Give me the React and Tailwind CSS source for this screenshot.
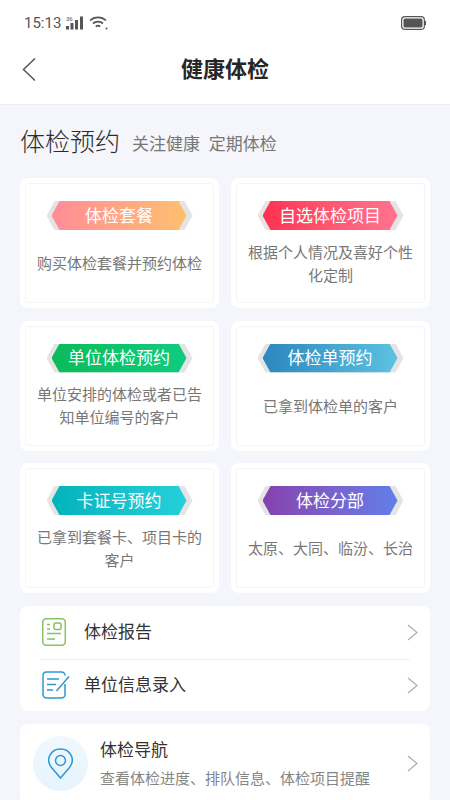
import React from 'react'

const cards = [
  { title: '体检套餐', desc: '购买体检套餐并预约体检', color: 'from-[#ff8c96] to-[#ffbf6e]' },
  { title: '自选体检项目', desc: '根据个人情况及喜好个性化定制', color: 'from-[#ff2f52] to-[#ff7390]' },
  { title: '单位体检预约', desc: '单位安排的体检或者已告知单位编号的客户', color: 'from-[#0cbb58] to-[#10cc80]' },
  { title: '体检单预约', desc: '已拿到体检单的客户', color: 'from-[#2c87bd] to-[#5cc2e2]' },
  { title: '卡证号预约', desc: '已拿到套餐卡、项目卡的客户', color: 'from-[#00b3bb] to-[#25d0da]' },
  { title: '体检分部', desc: '太原、大同、临汾、长治', color: 'from-[#8541ae] to-[#5e7fea]' },
]

function Chevron() {
  return (
    <svg width="11" height="17" viewBox="0 0 11 17" fill="none" stroke="#adadad" strokeWidth="1.2">
      <path d="M1 1l9 7.500-9 7.500" />
    </svg>
  )
}

function Card({ title, desc, color }) {
  return (
    <div className="h-[130px] rounded-[8px] bg-white p-[5px]">
      <div className="flex h-full flex-col items-center rounded-[3px] border border-[#f5f5f7] pt-[17px]">
        <div className="flex h-[29px] w-[146px] shrink-0 items-center justify-center bg-[#e4e4e4] pr-px [clip-path:polygon(0_50%,8px_0,138px_0,100%_50%,138px_100%,8px_100%)]">
          <div className={`flex h-full w-[135px] items-center justify-center bg-gradient-to-r pb-[2px] text-[17px] text-white [clip-path:polygon(0_50%,8px_0,127px_0,100%_50%,127px_100%,8px_100%)] ${color}`}>
            {title}
          </div>
        </div>
        <div className="flex flex-1 items-center px-[11px] pb-[7px] text-center text-[15px] leading-[23px] text-[#777777]">
          {desc}
        </div>
      </div>
    </div>
  )
}

export default function App() {
  return (
    <div className="h-[800px] w-[450px] overflow-hidden bg-[#f5f6fb] font-['Noto_Sans_CJK_SC',sans-serif]">
      <div className="h-[105px] border-b border-[#eeeff3] bg-white">
        <div className="flex h-[44px] items-center justify-between px-[24px] pt-[2px]">
          <div className="flex items-center gap-[5px]">
            <span className="font-['Roboto',sans-serif] text-[15px] text-[#555555]">15:13</span>
            <svg width="18" height="14" viewBox="0 0 18 14" fill="#555555">
              <text x="0" y="5" fontSize="6" fontFamily="Roboto, sans-serif">36</text>
              <rect x="0" y="10" width="3" height="3.500" />
              <rect x="4.500" y="7" width="3" height="6.500" />
              <rect x="9" y="4" width="3" height="9.500" />
              <rect x="14" y="0.500" width="3" height="13" />
            </svg>
            <svg width="19" height="14" viewBox="0 0 19 14" fill="none" stroke="#555555" strokeWidth="1.700">
              <path d="M1 4.500c4.500-4.300 11.500-4.300 16 0" />
              <path d="M4 7.500c2.800-2.500 7.200-2.500 10 0" />
              <path d="M6.800 10.500c1.300-1 3.100-1 4.400 0" />
              <circle cx="17.500" cy="12.500" r="1" fill="#555555" stroke="none" />
            </svg>
          </div>
          <svg width="25" height="14" viewBox="0 0 25 14">
            <rect x="0.600" y="0.600" width="22.800" height="12.800" rx="3.500" fill="none" stroke="#555555" strokeWidth="1.200" />
            <rect x="2.500" y="2.500" width="19" height="9" rx="1.500" fill="#555555" />
            <rect x="24" y="5" width="1" height="4" fill="#555555" />
          </svg>
        </div>
        <div className="relative flex h-[52px] items-center justify-center pb-[6px]">
          <svg className="absolute left-[22px] top-[13px]" width="14" height="25" viewBox="0 0 14 25" fill="none" stroke="#555555" strokeWidth="1.500">
            <path d="M13 1.500L1.500 12.500 13 23.500" />
          </svg>
          <h1 className="text-[22px] font-bold text-[#262626]">健康体检</h1>
        </div>
      </div>

      <div className="flex h-[73px] items-center gap-[12px] px-[20px] pb-[1px]">
        <span className="text-[25px] font-light text-[#2c2c2c]">体检预约</span>
        <span className="pt-[4px] text-[17px] text-[#777777] [word-spacing:5px]">关注健康 定期体检</span>
      </div>

      <div className="grid grid-cols-2 gap-x-[12px] gap-y-[12.500px] px-[20px]">
        {cards.map((c) => (
          <Card key={c.title} {...c} />
        ))}
      </div>

      <div className="mx-[20px] mt-[12.500px] rounded-[8px] bg-white">
        <div className="flex h-[53px] items-center pl-[22px] pr-[12px]">
          <svg width="24" height="28" viewBox="0 0 24 28" fill="none" stroke="#8cc063" strokeWidth="1.500">
            <rect x="0.700" y="0.700" width="22.600" height="26.600" rx="3.500" />
            <path d="M5 6.500h3M5 11h3M5 15.500h14M5 21h8" />
            <rect x="12" y="5" width="7" height="6.500" rx="1.500" />
          </svg>
          <span className="ml-[18px] flex-1 pb-[2px] text-[17px] text-[#333333]">体检报告</span>
          <Chevron />
        </div>
        <div className="mx-[20px] h-px bg-[#efeff1]" />
        <div className="flex h-[51px] items-center pl-[22px] pr-[12px]">
          <svg width="28" height="28" viewBox="0 0 28 28" fill="none" stroke="#2f97cf" strokeWidth="1.500">
            <path d="M23 13v10.500a3.500 3.500 0 0 1-3.500 3.500h-15A3.700 3.700 0 0 1 1 23.500V4.500A3.700 3.700 0 0 1 4.500 1h15A3.500 3.500 0 0 1 23 4.500" />
            <path d="M5 8h12M5 13.500h9M5 19h6M14.500 20L27 5.500" />
          </svg>
          <span className="ml-[14px] flex-1 pb-[2px] text-[17px] text-[#333333]">单位信息录入</span>
          <Chevron />
        </div>
      </div>

      <div className="mx-[20px] mt-[13px] flex h-[80px] items-center rounded-[8px] bg-white pl-[13px] pr-[12px]">
        <div className="flex h-[55px] w-[55px] shrink-0 items-center justify-center rounded-full bg-gradient-to-b from-[#f0f8fe] to-[#e6f4fd]">
          <svg width="25" height="31" viewBox="0 0 25 31" fill="none" stroke="#2f97cf" strokeWidth="1.500">
            <path d="M12.500 30L3.500 19.500C-3 11 3 1 12.500 1S28 11 21.500 19.500z" />
            <circle cx="12.500" cy="12.500" r="5" />
          </svg>
        </div>
        <div className="ml-[12px] flex-1 pb-[2px]">
          <div className="text-[17px] leading-[24px] text-[#333333]">体检导航</div>
          <div className="mt-[6px] text-[15px] leading-[22px] text-[#858585]">查看体检进度、排队信息、体检项目提醒</div>
        </div>
        <Chevron />
      </div>
    </div>
  )
}
